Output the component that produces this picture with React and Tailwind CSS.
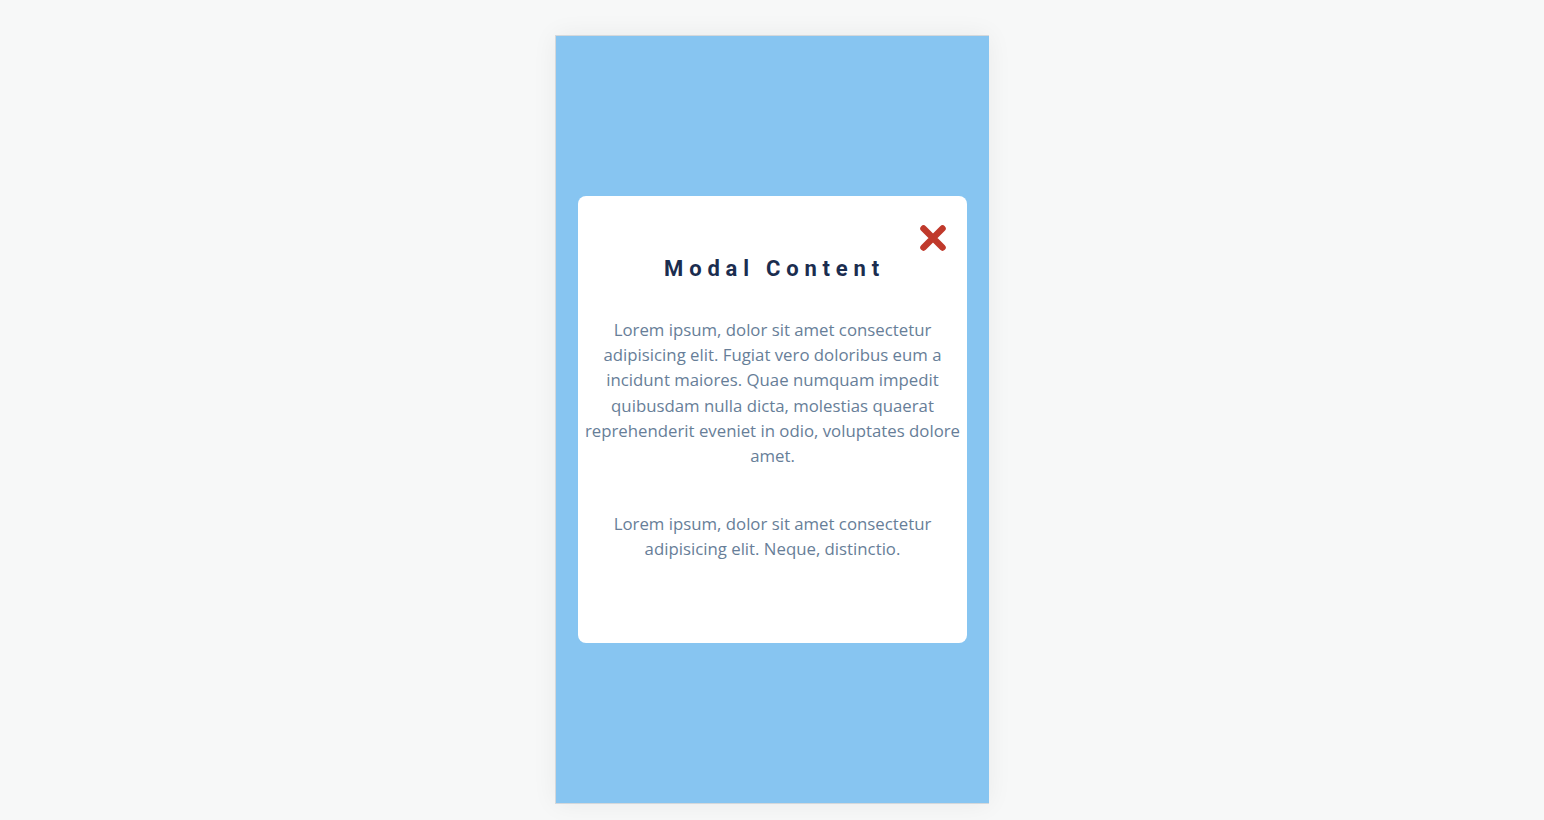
import React from 'react';

export default function App() {
  return (
    <div className="min-h-screen w-full bg-[#f7f8f8] flex justify-center pt-[35px]" style={{ fontFamily: '"Open Sans", sans-serif' }}>
      <div className="w-[434px] h-[769px] bg-[#87c5f1] border border-r-0 border-[#d4d8db] shadow-[0_0_24px_rgba(0,0,0,0.06)] flex items-center justify-center">
        <div className="relative w-[389px] h-[447px] bg-white rounded-lg px-[5px] pt-[58px] text-center">
          <button className="absolute top-[28px] right-[20px] text-[#c0392b]" aria-label="Close">
            <svg width="28" height="28" viewBox="0 0 28 28">
              <path d="M4.5 4.5 L23.5 23.5 M23.5 4.5 L4.5 23.5" stroke="currentColor" strokeWidth="6.5" strokeLinecap="round" />
            </svg>
          </button>
          <h2 className="font-['Roboto',sans-serif] font-bold text-[22px] leading-[30px] tracking-[5.8px] text-[#1b2d4f] pl-[4px]">
            Modal Content
          </h2>
          <p className="mt-[33px] text-[16.8px] leading-[25.2px] text-[#677e98]">
            Lorem ipsum, dolor sit amet consectetur adipisicing elit. Fugiat vero doloribus eum a incidunt maiores. Quae numquam impedit quibusdam nulla dicta, molestias quaerat reprehenderit eveniet in odio, voluptates dolore amet.
          </p>
          <p className="mt-[43px] text-[16.8px] leading-[25.2px] text-[#677e98]">
            Lorem ipsum, dolor sit amet consectetur adipisicing elit. Neque, distinctio.
          </p>
        </div>
      </div>
    </div>
  );
}
